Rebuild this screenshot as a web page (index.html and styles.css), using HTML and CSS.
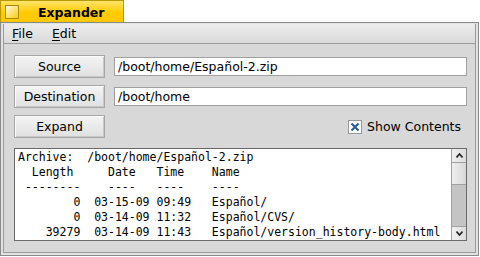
FILE: index.html
```html
<!DOCTYPE html>
<html>
<head>
<meta charset="utf-8">
<link rel="stylesheet" href="styles.css">
</head>
<body>
<div class="tab"><span class="close"></span><span class="title">Expander</span></div>
<div class="window">
  <div class="frame">
    <div class="menubar"><span class="menu"><u>F</u>ile</span><span class="menu"><u>E</u>dit</span></div>
    <div class="content">
      <div class="row"><div class="btn">Source</div><div class="field">/boot/home/Español-2.zip</div></div>
      <div class="row"><div class="btn">Destination</div><div class="field">/boot/home</div></div>
      <div class="row"><div class="btn">Expand</div><div class="check"><span class="box"><svg width="12" height="12" viewBox="0 0 12 12"><path d="M2.5 2.5 L9.5 9.5 M9.5 2.5 L2.5 9.5" stroke="#2d5e9e" stroke-width="2.2" fill="none"/></svg></span>Show Contents</div></div>
      <div class="listing">
<pre class="text">Archive:  /boot/home/Español-2.zip
  Length     Date   Time    Name
 --------    ----   ----    ----
        0  03-15-09 09:49   Español/
        0  03-14-09 11:32   Español/CVS/
    39279  03-14-09 11:43   Español/version_history-body.html</pre>
        <div class="scrollbar">
          <div class="arrow"><svg width="7" height="5" viewBox="0 0 7 5"><path d="M0.5 4.5 L3.5 1 L6.5 4.5" stroke="#202020" stroke-width="1.6" fill="none"/></svg></div>
          <div class="thumb"></div>
          <div class="track"></div>
          <div class="arrow"><svg width="7" height="5" viewBox="0 0 7 5"><path d="M0.5 0.5 L3.5 4 L6.5 0.5" stroke="#202020" stroke-width="1.6" fill="none"/></svg></div>
        </div>
      </div>
    </div>
  </div>
</div>
</body>
</html>
```
FILE: styles.css
```css
html, body { margin: 0; padding: 0; background: #ffffff; }
body { width: 480px; height: 257px; overflow: hidden; font-family: "DejaVu Sans", sans-serif; font-size: 12.5px; color: #000; }

.tab {
  width: 122px; height: 21px;
  border: 1px solid #b89a00; border-bottom: none;
  background: linear-gradient(#ffe46a, #ffcb00 55%, #ffc800);
  display: flex; align-items: center;
}
.close {
  width: 12px; height: 12px; margin-left: 4px;
  border: 1px solid #a88a10;
  background: linear-gradient(135deg, #fffbe8, #ffd84a 70%, #ffcc00);
}
.title { font-weight: bold; font-size: 12.5px; margin-left: 19px; margin-top: 1px; }

.window {
  width: 473px; height: 229px;
  border: 1px solid #8a8a8a;
  background: #e2e2e2;
  padding: 1px 2px 2px 2px;
}
.frame {
  height: 228px; border: 1px solid #9a9a9a; border-top: none;
  background: #d8d8d8; display: flex; flex-direction: column;
}
.menubar {
  height: 19px; display: flex; align-items: center;
  background: linear-gradient(#ececec, #dadada);
  border-bottom: 1px solid #9c9c9c;
}
.menu { margin-left: 8px; margin-right: 11px; }
.menu u { text-decoration-thickness: 1px; text-underline-offset: 2px; }

.content { padding: 11px 8px 0 10px; display: flex; flex-direction: column; gap: 7px; }
.row { display: flex; align-items: center; height: 23px; }
.btn {
  width: 89px; height: 21px; line-height: 21px; text-align: center;
  border: 1px solid #a6a6a6;
  background: linear-gradient(#f4f4f4, #e0e0e0);
  box-shadow: inset 1px 1px 0 #fafafa, inset -1px -1px 0 #c8c8c8;
}
.field {
  margin-left: 9px; flex: 1; height: 17px; line-height: 17px;
  border: 1px solid #a0a0a0; background: #fff; padding-left: 3px;
}
.check { margin-left: auto; margin-right: 6px; display: flex; align-items: center; }
.box {
  width: 12px; height: 12px; border: 1px solid #9a9a9a; background: #fff;
  display: flex; align-items: center; justify-content: center; margin-right: 5px;
}

.listing {
  margin-top: 3px; height: 91px; display: flex;
  border: 1px solid #6a6a6a; background: #fff;
}
.text {
  margin: 0; flex: 1; padding: 1px 0 0 3px;
  font-family: "DejaVu Sans Mono", monospace; font-size: 11.5px; line-height: 15px;
  overflow: hidden;
}
.scrollbar { width: 14px; border-left: 1px solid #a0a0a0; display: flex; flex-direction: column; background: #c4c4c4; }
.arrow {
  height: 13px; border-bottom: 1px solid #a0a0a0; background: linear-gradient(90deg, #f0f0f0, #dcdcdc);
  display: flex; align-items: center; justify-content: center;
}
.arrow:last-child { border-bottom: none; border-top: 1px solid #a0a0a0; }
.thumb { height: 21px; border-bottom: 1px solid #a0a0a0; background: linear-gradient(90deg, #eeeeee, #d8d8d8); }
.track { flex: 1; }
```
